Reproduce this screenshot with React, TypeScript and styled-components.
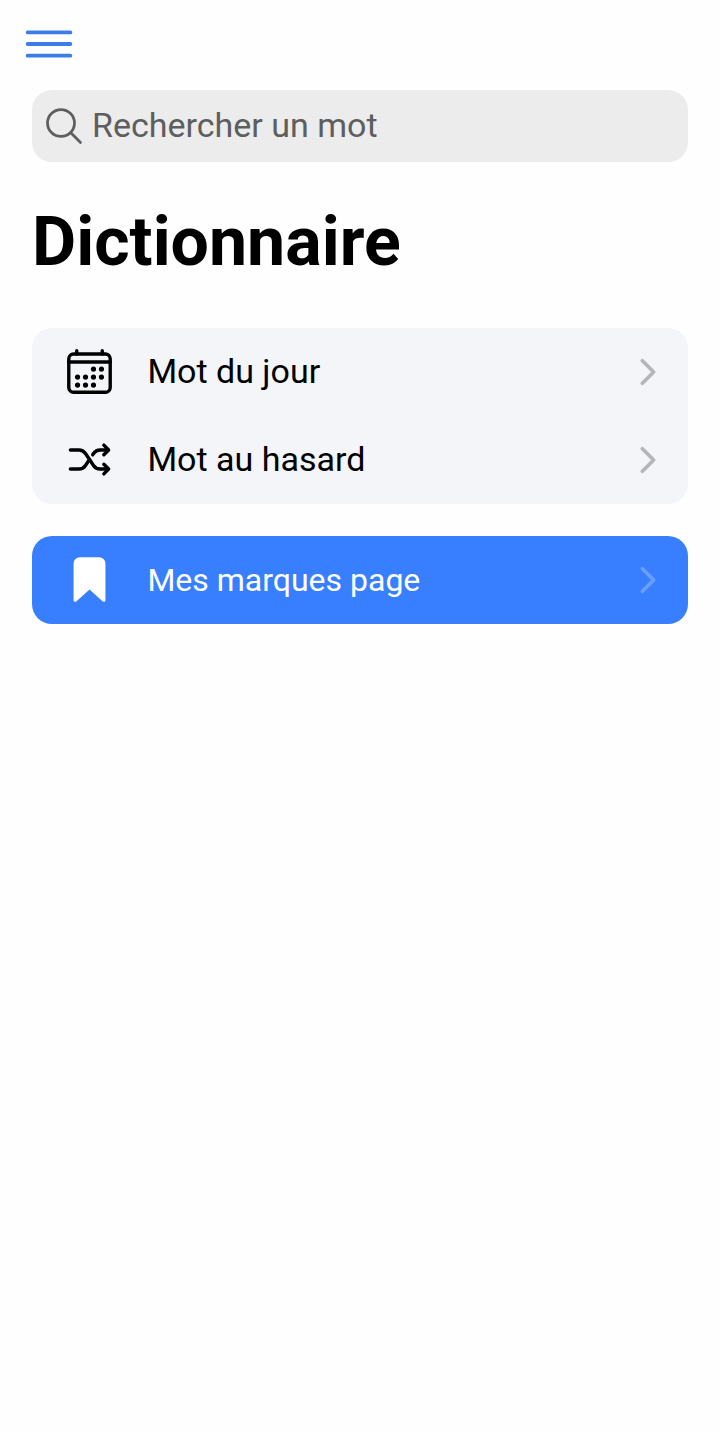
import React from "react";
import styled, { createGlobalStyle } from "styled-components";

const GlobalStyle = createGlobalStyle`
  * { box-sizing: border-box; }
  body { margin: 0; background: #fefefe; font-family: Roboto, "Liberation Sans", sans-serif; color: #000; }
  button, input { font: inherit; color: inherit; border: 0; background: none; padding: 0; margin: 0; }
`;

const Screen = styled.main`
  min-height: 1432px;
  background: #fefefe;
`;

const TopBar = styled.header`
  display: flex;
  align-items: center;
  height: 90px;
  padding: 0 18px 2px;
`;

const MenuButton = styled.button`
  display: flex;
  color: #3d7ce9;
`;

const Content = styled.div`
  display: flex;
  flex-direction: column;
  padding: 0 32px;
`;

const SearchBar = styled.label`
  display: flex;
  align-items: center;
  gap: 6px;
  height: 72px;
  padding: 0 10px;
  border-radius: 20px;
  background: #ececec;
  color: #5e5e5e;
  font-size: 34px;
`;

const SearchText = styled.span`
  padding-bottom: 2px;
  line-height: 40px;
  white-space: nowrap;
`;

const Title = styled.h1`
  margin: 39px 0 47px;
  height: 80px;
  font-size: 68px;
  line-height: 82px;
  font-weight: 700;
`;

const Group = styled.section<{ $primary?: boolean }>`
  border-radius: 20px;
  overflow: hidden;
  margin-bottom: 32px;
  background: ${(p) => (p.$primary ? "#387fff" : "#f3f5f9")};
  color: ${(p) => (p.$primary ? "#fff" : "#000")};
`;

const Row = styled.button`
  display: flex;
  align-items: center;
  width: 100%;
  height: 88px;
  padding: 0 20px 0 32px;
  text-align: left;
`;

const Label = styled.span<{ $compact?: boolean }>`
  flex: 1;
  padding: 0 0 ${(p) => (p.$compact ? 0 : 2)}px 32.4px;
  font-size: ${(p) => (p.$compact ? 32 : 34)}px;
  line-height: 40px;
`;

const Icon = styled.svg.attrs({ viewBox: "0 0 512 512" })<{ $size: number; $weight?: number }>`
  flex: none;
  width: ${(p) => p.$size}px;
  height: ${(p) => p.$size}px;
  fill: none;
  stroke: currentColor;
  stroke-width: ${(p) => p.$weight ?? 32};
  stroke-linecap: round;
  stroke-linejoin: round;
`;

const LeadingIcon = styled(Icon)`
  margin-bottom: 1px;
`;

const Chevron = styled(Icon)<{ $tint: string }>`
  color: ${(p) => p.$tint};
`;

const dots: [number, number][] = [
  [296, 232], [376, 232],
  [136, 312], [216, 312], [296, 312], [376, 312],
  [136, 392], [216, 392], [296, 392],
];

const CalendarIcon = () => (
  <LeadingIcon $size={51} $weight={34}>
    <rect x="48" y="80" width="416" height="384" rx="48" />
    <path d="M128 48v32M384 48v32M464 160H48" />
    <g fill="currentColor" stroke="none">
      {dots.map(([x, y]) => (
        <circle key={`${x}-${y}`} cx={x} cy={y} r="26" />
      ))}
    </g>
  </LeadingIcon>
);

const ShuffleIcon = () => (
  <LeadingIcon $size={51} $weight={34}>
    <path d="M400 304l48 48-48 48M400 112l48 48-48 48M64 352h85.19a80 80 0 0066.56-35.62L256 256" />
    <path d="M64 160h85.19a80 80 0 0166.56 35.62l80.5 120.76A80 80 0 00362.81 352H416M416 160h-53.19a80 80 0 00-66.56 35.62L288 208" />
  </LeadingIcon>
);

const BookmarkIcon = () => (
  <LeadingIcon $size={51}>
    <path
      fill="currentColor"
      stroke="none"
      d="M400 480a16 16 0 01-10.63-4L256 357.41 122.63 476A16 16 0 0196 464V96a64.07 64.07 0 0164-64h192a64.07 64.07 0 0164 64v368a16 16 0 01-16 16z"
    />
  </LeadingIcon>
);

interface ItemProps {
  icon: React.ReactNode;
  label: string;
  compact?: boolean;
  tint?: string;
}

const Item = ({ icon, label, compact, tint = "#b5b6b8" }: ItemProps) => (
  <Row type="button">
    {icon}
    <Label $compact={compact}>{label}</Label>
    <Chevron $size={40} $weight={48} $tint={tint}>
      <path d="M184 112l144 144-144 144" />
    </Chevron>
  </Row>
);

export default function App() {
  return (
    <Screen>
      <GlobalStyle />
      <TopBar>
        <MenuButton type="button" aria-label="Menu">
          <Icon $size={62}>
            <path d="M80 160h352M80 256h352M80 352h352" />
          </Icon>
        </MenuButton>
      </TopBar>
      <Content>
        <SearchBar>
          <Icon $size={44}>
            <path d="M221.09 64a157.09 157.09 0 10157.09 157.09A157.1 157.1 0 00221.09 64zM338.29 338.29L448 448" />
          </Icon>
          <SearchText>Rechercher un mot</SearchText>
        </SearchBar>
        <Title>Dictionnaire</Title>
        <Group>
          <Item icon={<CalendarIcon />} label="Mot du jour" />
          <Item icon={<ShuffleIcon />} label="Mot au hasard" />
        </Group>
        <Group $primary>
          <Item icon={<BookmarkIcon />} label="Mes marques page" compact tint="#6a9ffc" />
        </Group>
      </Content>
    </Screen>
  );
}
